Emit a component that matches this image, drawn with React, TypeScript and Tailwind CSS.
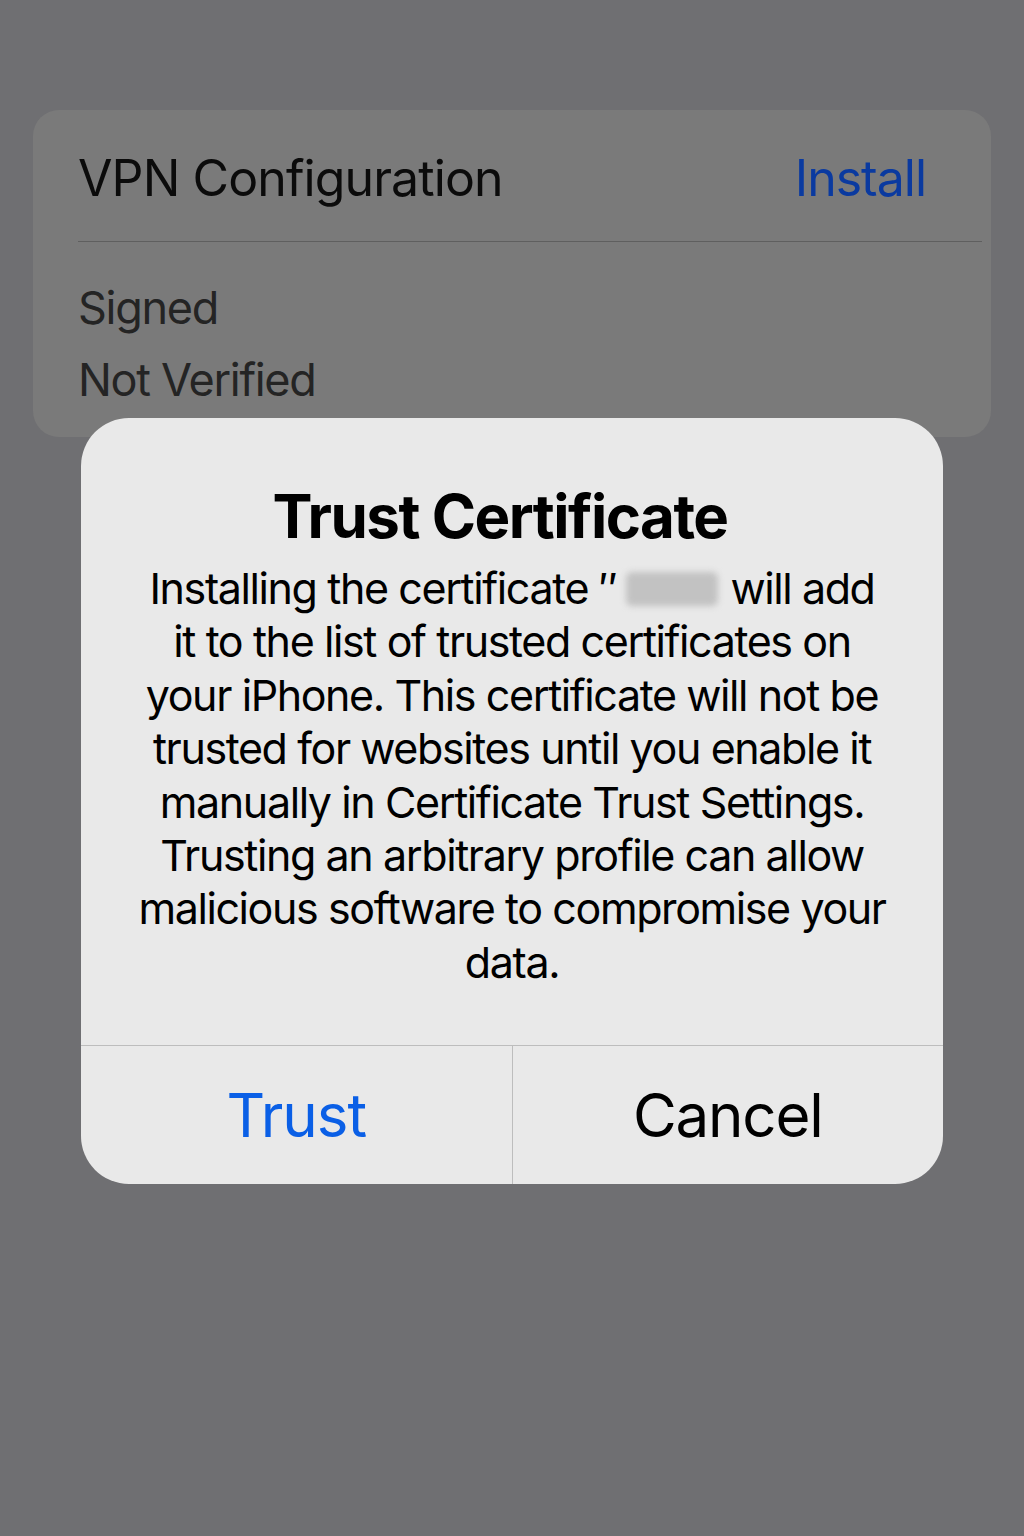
import React from "react";

export default function App() {
  const lines = [
    "it to the list of trusted certificates on",
    "your iPhone. This certificate will not be",
    "trusted for websites until you enable it",
    "manually in Certificate Trust Settings.",
    "Trusting an arbitrary profile can allow",
    "malicious software to compromise your",
    "data.",
  ];
  return (
    <div
      className="w-[1024px] h-[1536px] bg-[#6f6f72] flex flex-col items-center pt-[110px]"
      style={{ fontFamily: "Inter, 'Noto Sans', sans-serif" }}
    >
      <div className="w-[958px] h-[327px] rounded-[26px] bg-[#7a7a7a] flex flex-col pl-[45px] pr-[9px]">
        <div className="h-[132px] flex items-center justify-between pr-[56px] border-b border-[#5f5f5f] pt-[6px]">
          <span className="text-[50px] tracking-[-0.9px] text-[#0b0b0b]">VPN Configuration</span>
          <span className="text-[50px] tracking-[-1px] text-[#0a3aa0]">Install</span>
        </div>
        <div className="flex flex-col pt-[41px] gap-[22px] text-[45px] leading-[50px] tracking-[-1.3px] text-[#242424]">
          <span>Signed</span>
          <span>Not Verified</span>
        </div>
      </div>
      <div className="-mt-[19px] w-[862px] rounded-[48px] bg-[#e9e9e9] flex flex-col overflow-hidden">
        <div className="flex flex-col items-center pt-[62px] pb-[56px] text-center text-black">
          <div className="text-[60px] leading-[72px] font-bold tracking-[-1.5px] pr-[24px]">Trust Certificate</div>
          <div className="text-[43px] leading-[53.4px] tracking-[-1.4px] mt-[10px]">
            <div className="flex items-center justify-center">
              <span>Installing the certificate ″</span>
              <span className="inline-block w-[92px] h-[34px] ml-[10px] mr-[12px] bg-[#c2c2c2] rounded-[6px] blur-[3px]" />
              <span>will add</span>
            </div>
            {lines.map((l, i) => (
              <div key={i}>{l}</div>
            ))}
          </div>
        </div>
        <div className="h-[139px] flex border-t border-[#bdbdbd]">
          <div className="flex-1 flex items-center justify-center text-[60px] tracking-[-1px] text-[#0a5fe6] border-r border-[#bdbdbd]">
            Trust
          </div>
          <div className="flex-1 flex items-center justify-center text-[60px] tracking-[-1.2px] text-black">
            Cancel
          </div>
        </div>
      </div>
    </div>
  );
}
